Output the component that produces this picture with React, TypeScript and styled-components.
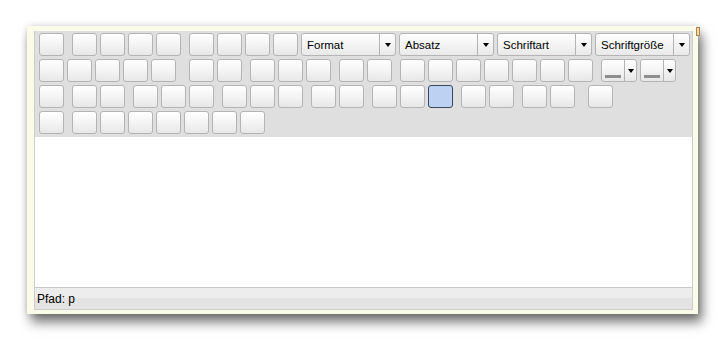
import * as React from 'react';
import styled, { createGlobalStyle } from 'styled-components';

const GlobalStyle = createGlobalStyle`
    html, body {
        margin: 0;
        padding: 0;
        background: #ffffff;
    }
    body {
        font-family: "Liberation Sans", Arial, sans-serif;
    }
`;

const Page = styled.div`
    padding: 26px 0 0 27px;
    width: 725px;
    height: 339px;
    box-sizing: border-box;
`;

const Frame = styled.div`
    position: relative;
    width: 671px;
    box-sizing: border-box;
    padding: 5px 5px 4px 7px;
    background: #fbfbea;
    box-shadow: 4px 8px 11px rgba(0, 0, 0, 0.55), 0 0 6px rgba(0, 0, 0, 0.15);
`;

const Handle = styled.span`
    position: absolute;
    top: 1px;
    right: -2px;
    width: 2px;
    height: 7px;
    border: 1px solid #b0844a;
    background: #efd9a8;
`;

const Editor = styled.div`
    display: flex;
    flex-direction: column;
    width: 659px;
    box-sizing: border-box;
    border: 1px solid #cdcdcd;
    border-top: none;
`;

const Toolbar = styled.div`
    display: flex;
    flex-direction: column;
    gap: 3px;
    padding: 2px 0 3px 4px;
    background: #dfdfdf;
`;

const ToolRow = styled.div`
    display: flex;
    gap: 8px;
    height: 23px;
`;

const Group = styled.div<{ $wide?: boolean }>`
    display: flex;
    gap: 3px;
    margin-left: ${p => (p.$wide ? '5px' : '0')};
`;

const Button = styled.div<{ $active?: boolean }>`
    width: 25px;
    height: 23px;
    box-sizing: border-box;
    border: 1px solid ${p => (p.$active ? '#3d4660' : '#b4b4b4')};
    border-radius: 3px;
    background: ${p => (p.$active ? '#bdd1f3' : 'linear-gradient(#ffffff, #f4f4f4 50%, #e7e7e7)')};
`;

const Dropdown = styled.div`
    display: flex;
    width: 95px;
    height: 23px;
    box-sizing: border-box;
    border: 1px solid #b4b4b4;
    border-radius: 3px;
    background: linear-gradient(#ffffff, #f4f4f4 50%, #e9e9e9);
    font-size: 11.5px;
    color: #000000;
`;

const DropdownLabel = styled.div`
    flex: 1;
    display: flex;
    align-items: center;
    padding-left: 5px;
    white-space: nowrap;
    overflow: hidden;
`;

const DropdownArrow = styled.div<{ $small?: boolean }>`
    width: ${p => (p.$small ? '11px' : '15px')};
    display: flex;
    align-items: center;
    justify-content: center;
    border-left: 1px solid #b4b4b4;

    &::after {
        content: '';
        border-left: 3.5px solid transparent;
        border-right: 3.5px solid transparent;
        border-top: 4px solid #000000;
    }
`;

const Split = styled.div`
    display: flex;
    width: 36px;
    height: 23px;
    box-sizing: border-box;
    border: 1px solid #b4b4b4;
    border-radius: 3px;
    background: linear-gradient(#ffffff, #f4f4f4 50%, #e7e7e7);
`;

const SplitMain = styled.div`
    flex: 1;
    display: flex;
    align-items: flex-end;
    justify-content: center;
    padding-bottom: 3px;

    &::after {
        content: '';
        width: 16px;
        height: 3px;
        background: #8e8e8e;
    }
`;

const SplitRow = styled.div`
    display: flex;
    gap: 3px;
`;

const Body = styled.div`
    height: 150px;
    background: #ffffff;
`;

const StatusBar = styled.div`
    display: flex;
    align-items: center;
    height: 21px;
    padding-left: 2px;
    border-top: 1px solid #c9c9c9;
    background: linear-gradient(#ededed, #ececec 50%, #e3e3e3 50%, #e4e4e4);
    font-size: 12px;
    color: #000000;
`;

function Buttons({ count, active }: { count: number; active?: number }) {
    const items = [];
    for (let i = 0; i < count; i++) {
        items.push(<Button key={i} $active={active === i} />);
    }
    return <>{items}</>;
}

const dropdowns = ['Format', 'Absatz', 'Schriftart', 'Schriftgröße'];

export default function App() {
    return (
        <Page>
            <GlobalStyle />
            <Frame>
                <Handle />
                <Editor>
                    <Toolbar>
                        <ToolRow>
                            <Group><Buttons count={1} /></Group>
                            <Group><Buttons count={4} /></Group>
                            <Group>
                                <Buttons count={4} />
                                {dropdowns.map(name => (
                                    <Dropdown key={name}>
                                        <DropdownLabel>{name}</DropdownLabel>
                                        <DropdownArrow />
                                    </Dropdown>
                                ))}
                            </Group>
                        </ToolRow>
                        <ToolRow>
                            <Group><Buttons count={5} /></Group>
                            <Group $wide><Buttons count={2} /></Group>
                            <Group><Buttons count={3} /></Group>
                            <Group><Buttons count={2} /></Group>
                            <Group><Buttons count={7} /></Group>
                            <SplitRow>
                                <Split><SplitMain /><DropdownArrow $small /></Split>
                                <Split><SplitMain /><DropdownArrow $small /></Split>
                            </SplitRow>
                        </ToolRow>
                        <ToolRow>
                            <Group><Buttons count={1} /></Group>
                            <Group><Buttons count={2} /></Group>
                            <Group><Buttons count={3} /></Group>
                            <Group><Buttons count={3} /></Group>
                            <Group><Buttons count={2} /></Group>
                            <Group><Buttons count={3} active={2} /></Group>
                            <Group><Buttons count={2} /></Group>
                            <Group><Buttons count={2} /></Group>
                            <Group $wide><Buttons count={1} /></Group>
                        </ToolRow>
                        <ToolRow>
                            <Group><Buttons count={1} /></Group>
                            <Group><Buttons count={7} /></Group>
                        </ToolRow>
                    </Toolbar>
                    <Body />
                    <StatusBar>Pfad: p</StatusBar>
                </Editor>
            </Frame>
        </Page>
    );
}
